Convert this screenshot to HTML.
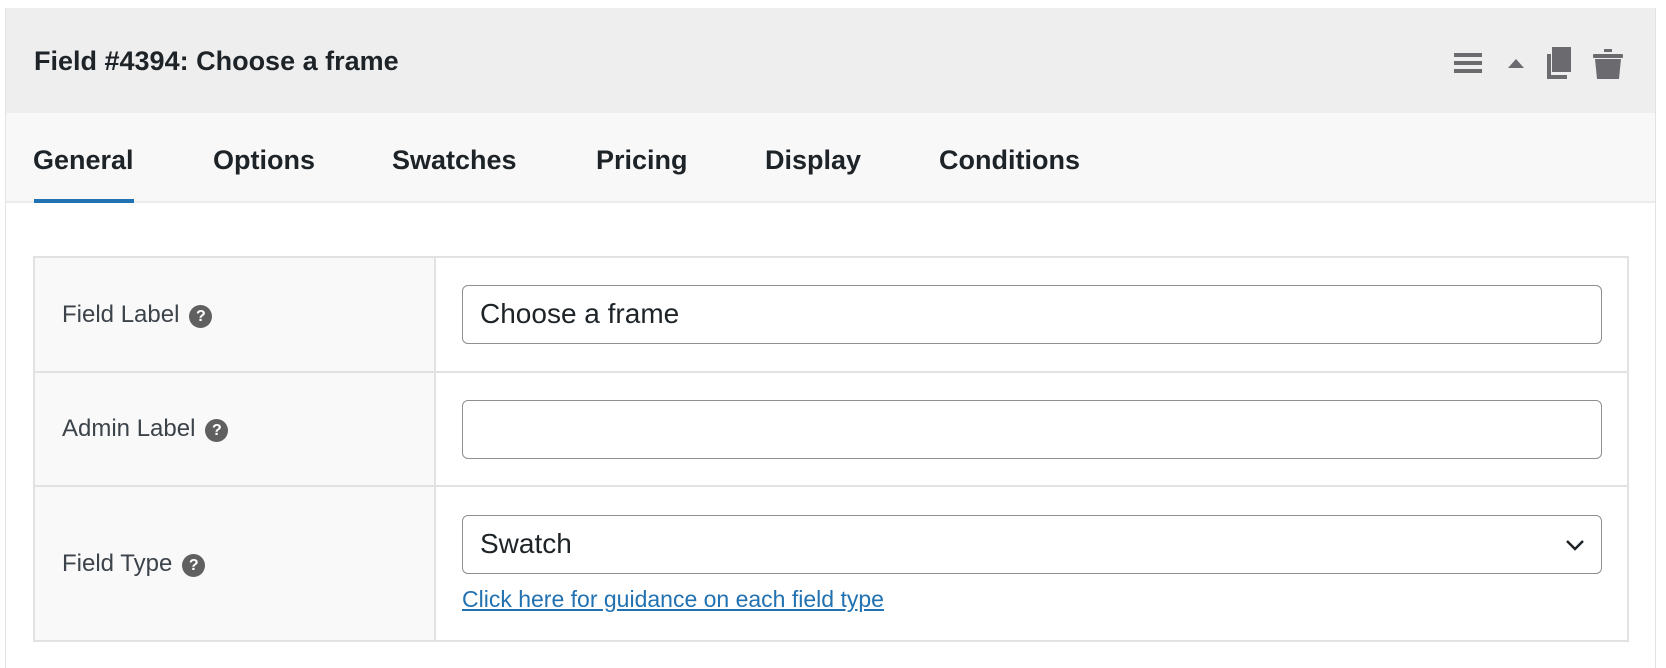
<!DOCTYPE html>
<html><head><style>
*{box-sizing:border-box;margin:0;padding:0}
body{width:1666px;height:660px;background:#fff;font-family:"Liberation Sans",Arial,sans-serif;position:relative;overflow:hidden}
.panel{position:absolute;left:5px;top:8px;width:1651px;height:660px;border-left:1px solid #e2e2e2;border-right:1px solid #e2e2e2}
.hdr{position:absolute;left:0;top:0;right:0;height:105px;background:#eeeeef}
.title{position:absolute;left:28px;top:38px;font-size:27px;font-weight:bold;color:#1d2327}
.tabs{position:absolute;left:0;top:105px;right:0;height:90px;background:#f8f8f9;border-bottom:2px solid #ececec}
.tab{position:absolute;top:32px;font-size:27px;font-weight:bold;color:#1d2327}
.ul{position:absolute;left:28px;top:86px;width:100px;height:4px;background:#2271b1}
table{position:absolute;left:33px;top:256px;width:1596px;border-collapse:collapse;border:2px solid #e0e0e0}
td{border:2px solid #e2e2e2;vertical-align:middle}
td.l{width:401px;background:#f9f9f9;padding-left:27px;font-size:24px;color:#3c434a}
td.r{padding:0 25px 0 26px}
.q{display:inline-block;width:23px;height:23px;border-radius:50%;background:#606060;color:#fff;font-size:16px;font-weight:bold;text-align:center;line-height:23px;vertical-align:1px;margin-left:10px}
.inp{height:59px;border:1.5px solid #8c8f94;border-radius:6px;font-size:28px;color:#1d2327;padding-left:17px;line-height:56px;position:relative}
a{color:#2271b1;font-size:23px;text-decoration:underline;display:block;margin-top:12px}
</style></head><body>
<div class="panel">
<div class="hdr">
<div class="title">Field #4394: Choose a frame</div>
<svg style="position:absolute;left:1448px;top:36px" width="180" height="36" viewBox="0 0 180 36">
<g fill="#6b6b6f">
<rect x="0" y="9" width="28" height="4"/><rect x="0" y="17" width="28" height="4"/><rect x="0" y="25" width="28" height="4"/>
<polygon points="54,24 62,15 70,24"/>
<rect x="98" y="3" width="19" height="25"/>
<path d="M93 10h4v21h16v4h-20z"/>
<rect x="139" y="10" width="30" height="4" rx="1"/>
<path d="M150 5h8v3h-8z"/>
<path d="M141 15h26l-2 20h-22z"/>
</g></svg>
</div>
<div class="tabs">
<div class="tab" style="left:27px">General</div>
<div class="tab" style="left:207px">Options</div>
<div class="tab" style="left:386px">Swatches</div>
<div class="tab" style="left:590px">Pricing</div>
<div class="tab" style="left:759px">Display</div>
<div class="tab" style="left:933px">Conditions</div>
<div class="ul"></div>
</div>
</div>
<table>
<tr style="height:115px"><td class="l">Field Label<span class="q">?</span></td><td class="r"><div class="inp">Choose a frame</div></td></tr>
<tr style="height:114px"><td class="l">Admin Label<span class="q">?</span></td><td class="r"><div class="inp"></div></td></tr>
<tr style="height:155px"><td class="l">Field Type<span class="q">?</span></td><td class="r" style="padding-top:0"><div class="inp">Swatch<svg style="position:absolute;right:16px;top:22px" width="20" height="14" viewBox="0 0 20 14"><path d="M2 3l8 8 8-8" fill="none" stroke="#1d2327" stroke-width="2.5"/></svg></div><a>Click here for guidance on each field type</a></td></tr>
</table>
</body></html>
